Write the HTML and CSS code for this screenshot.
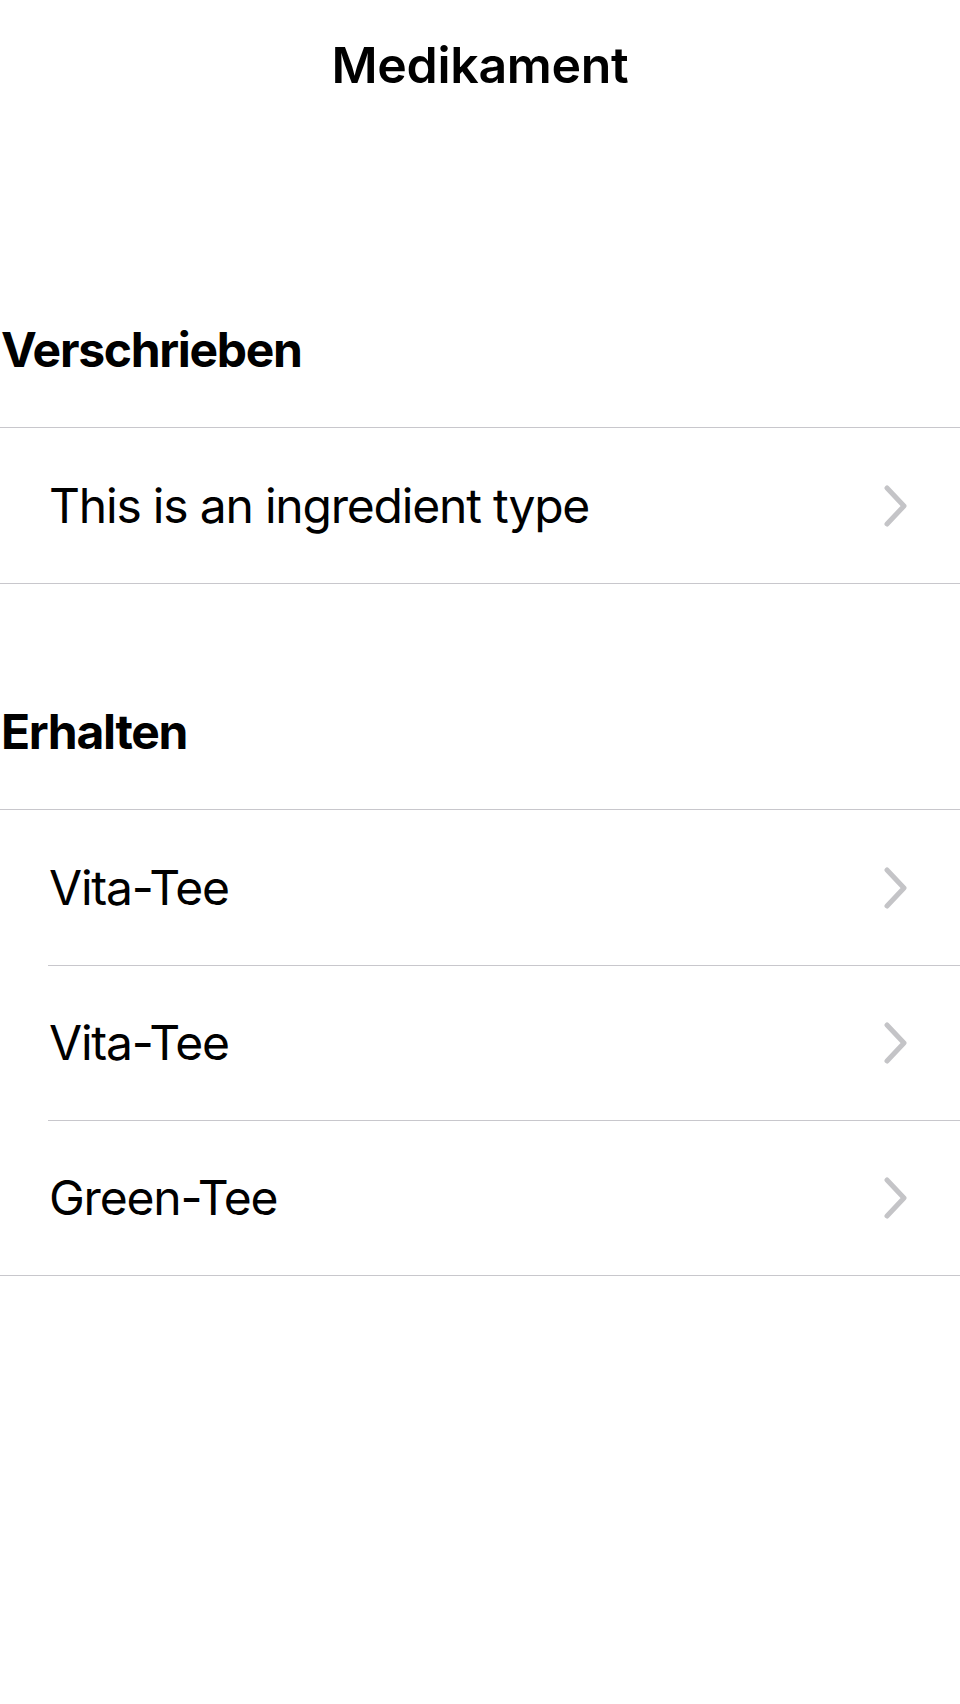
FILE: index.html
```html
<!DOCTYPE html>
<html lang="de">
<head>
<meta charset="utf-8">
<title>Medikament</title>
<link rel="stylesheet" href="styles.css">
</head>
<body>
<div class="screen">
  <header class="nav"><h1 class="nav-title">Medikament</h1></header>

  <section class="section first">
    <h2 class="section-title">Verschrieben</h2>
    <ul class="group">
      <li class="row"><span class="row-label">This is an ingredient type</span><svg class="chev" viewBox="0 0 24 42" width="24" height="42"><path d="M3 3 L20 21 L3 39" fill="none" stroke="#c4c4c7" stroke-width="5" stroke-linecap="round" stroke-linejoin="round"/></svg></li>
    </ul>
  </section>

  <section class="section second">
    <h2 class="section-title">Erhalten</h2>
    <ul class="group">
      <li class="row"><span class="row-label">Vita-Tee</span><svg class="chev" viewBox="0 0 24 42" width="24" height="42"><path d="M3 3 L20 21 L3 39" fill="none" stroke="#c4c4c7" stroke-width="5" stroke-linecap="round" stroke-linejoin="round"/></svg></li>
      <li class="row"><span class="row-label">Vita-Tee</span><svg class="chev" viewBox="0 0 24 42" width="24" height="42"><path d="M3 3 L20 21 L3 39" fill="none" stroke="#c4c4c7" stroke-width="5" stroke-linecap="round" stroke-linejoin="round"/></svg></li>
      <li class="row"><span class="row-label">Green-Tee</span><svg class="chev" viewBox="0 0 24 42" width="24" height="42"><path d="M3 3 L20 21 L3 39" fill="none" stroke="#c4c4c7" stroke-width="5" stroke-linecap="round" stroke-linejoin="round"/></svg></li>
    </ul>
  </section>
</div>
</body>
</html>
```

FILE: styles.css
```css
html, body {
  margin: 0;
  padding: 0;
  background: #ffffff;
}
body {
  font-family: Inter, "Noto Sans", "Liberation Sans", sans-serif;
  color: #000000;
  width: 960px;
  height: 1704px;
  overflow: hidden;
}
.screen {
  display: flex;
  flex-direction: column;
}
.nav {
  padding-top: 35px;
  display: flex;
  justify-content: center;
}
.nav-title {
  margin: 0;
  font-size: 50px;
  line-height: 60px;
  font-weight: 600;
  letter-spacing: -0.3px;
}
.section.first {
  margin-top: 225px;
}
.section.second {
  margin-top: 118px;
}
.section-title {
  margin: 0;
  padding-left: 1px;
  padding-bottom: 47px;
  font-size: 48px;
  line-height: 60px;
  font-weight: 700;
  letter-spacing: -1.3px;
}
.group {
  list-style: none;
  margin: 0;
  padding: 0;
  border-top: 1px solid #c8c7cc;
  border-bottom: 1px solid #c8c7cc;
}
.row {
  height: 155px;
  margin-left: 48px;
  padding-right: 52px;
  display: flex;
  align-items: center;
  justify-content: space-between;
  box-sizing: border-box;
}
.row + .row {
  border-top: 1px solid #c8c7cc;
}
.row-label {
  padding-left: 1px;
  font-size: 48px;
  line-height: 60px;
  font-weight: 400;
  letter-spacing: -1.2px;
}
.chev {
  display: block;
  flex: none;
}
```
